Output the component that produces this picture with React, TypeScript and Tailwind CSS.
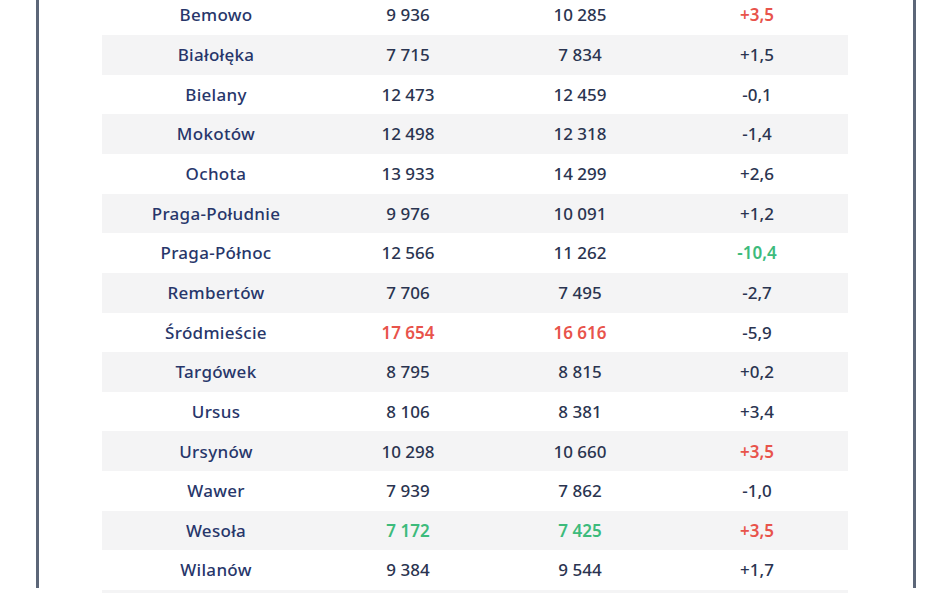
type Tone = "red" | "green" | undefined;

type Row = {
  name: string;
  a: string;
  b: string;
  diff: string;
  abTone?: Tone;
  diffTone?: Tone;
};

const rows: Row[] = [
  { name: "Bemowo", a: "9 936", b: "10 285", diff: "+3,5", diffTone: "red" },
  { name: "Białołęka", a: "7 715", b: "7 834", diff: "+1,5" },
  { name: "Bielany", a: "12 473", b: "12 459", diff: "-0,1" },
  { name: "Mokotów", a: "12 498", b: "12 318", diff: "-1,4" },
  { name: "Ochota", a: "13 933", b: "14 299", diff: "+2,6" },
  { name: "Praga-Południe", a: "9 976", b: "10 091", diff: "+1,2" },
  { name: "Praga-Północ", a: "12 566", b: "11 262", diff: "-10,4", diffTone: "green" },
  { name: "Rembertów", a: "7 706", b: "7 495", diff: "-2,7" },
  { name: "Śródmieście", a: "17 654", b: "16 616", diff: "-5,9", abTone: "red" },
  { name: "Targówek", a: "8 795", b: "8 815", diff: "+0,2" },
  { name: "Ursus", a: "8 106", b: "8 381", diff: "+3,4" },
  { name: "Ursynów", a: "10 298", b: "10 660", diff: "+3,5", diffTone: "red" },
  { name: "Wawer", a: "7 939", b: "7 862", diff: "-1,0" },
  { name: "Wesoła", a: "7 172", b: "7 425", diff: "+3,5", abTone: "green", diffTone: "red" },
  { name: "Wilanów", a: "9 384", b: "9 544", diff: "+1,7" },
  // next row only peeks in at the bottom edge
  { name: "", a: "", b: "", diff: "" },
];

function toneClass(t: Tone, base: string) {
  if (t === "red") return "text-[#e8534b] font-semibold";
  if (t === "green") return "text-[#3dbb7c] font-semibold";
  return base;
}

export default function App() {
  return (
    <div
      className="w-[948px] h-[593px] overflow-hidden bg-white pl-[36px]"
      style={{ fontFamily: '"Noto Sans", "DejaVu Sans", sans-serif' }}
    >
      <div className="w-[880px] h-full border-x-[3px] border-[#5c6678] pl-[63px]">
        <div className="w-[746px] mt-[-4.6px]">
          {rows.map((r, i) => (
            <div
              key={i}
              className={`grid grid-cols-[228px_156px_188px_174px] items-center h-[39.65px] text-[17px] font-medium ${
                i % 2 === 1 ? "bg-[#f4f4f5]" : "bg-white"
              }`}
            >
              <div className="text-center text-[#27366a] tracking-[0.3px]">{r.name}</div>
              <div className={`text-center ${toneClass(r.abTone, "text-[#2a3450]")}`}>{r.a}</div>
              <div className={`text-center ${toneClass(r.abTone, "text-[#2a3450]")}`}>{r.b}</div>
              <div className={`text-center pr-2 ${toneClass(r.diffTone, "text-[#2a3450]")}`}>{r.diff}</div>
            </div>
          ))}
        </div>
      </div>
    </div>
  );
}
